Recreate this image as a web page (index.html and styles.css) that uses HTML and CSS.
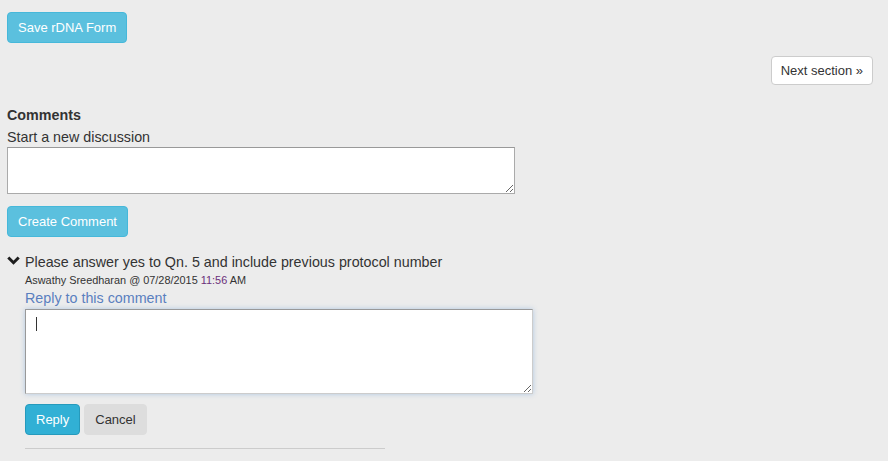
FILE: index.html
```html
<!DOCTYPE html>
<html lang="en">
<head>
    <meta charset="UTF-8">
    <title>rDNA Form</title>
    <link rel="stylesheet" href="styles.css">
</head>
<body>
    <div class="page">
        <div class="saveRow">
            <button class="btn btnInfo">Save rDNA Form</button>
        </div>
        <div class="navRow">
            <button class="btn btnDefault btnNav">Next section &raquo;</button>
        </div>

        <div class="comments">
            <div class="commentsTitle">Comments</div>
            <div class="newLabel">Start a new discussion</div>
            <textarea class="newText"></textarea>
            <div class="createRow">
                <button class="btn btnInfo">Create Comment</button>
            </div>

            <div class="thread">
                <div class="threadHead">
                    <svg class="chevron" width="13" height="9" viewBox="0 0 13 9">
                        <path d="M1.3 1.5 L6.5 6.7 L11.7 1.5" fill="none" stroke="#1e1e1e" stroke-width="3"/>
                    </svg>
                    <div class="threadBody">
                        <div class="commentText">Please answer yes to Qn. 5 and include previous protocol number</div>
                        <div class="commentMeta">Aswathy Sreedharan @ 07/28/2015 <span class="time">11:56</span> AM</div>
                        <a class="replyLink" href="#">Reply to this comment</a>
                        <div class="replyBox">
                            <textarea class="replyText"></textarea>
                            <span class="caret"></span>
                        </div>
                        <div class="replyActions">
                            <button class="btn btnInfoActive">Reply</button>
                            <button class="btn btnCancel">Cancel</button>
                        </div>
                        <div class="divider"></div>
                    </div>
                </div>
            </div>
        </div>
    </div>
</body>
</html>
```

FILE: styles.css
```css
html, body {
    margin: 0;
    padding: 0;
    background-color: #ececec;
}
.page {
    padding: 12px 15px 0 7px;
    font-family: "Liberation Sans", Arial, sans-serif;
    font-size: 14.3px;
    color: #333;
}
.btn {
    font-family: "Liberation Sans", Arial, sans-serif;
    font-size: 13px;
    line-height: 19px;
    padding: 5px 10px;
    border: 1px solid transparent;
    border-radius: 4px;
    cursor: pointer;
}
.btnInfo {
    background-color: #5bc0de;
    border-color: #46b8da;
    color: #fff;
}
.btnInfoActive {
    background-color: #31b0d5;
    border-color: #269abc;
    color: #fff;
}
.btnDefault {
    background-color: #fff;
    border-color: #ccc;
    color: #333;
}
.btnNav {
    padding: 4px 9px;
}
.btnCancel {
    background-color: #ddd;
    border-color: #ddd;
    color: #333;
}
.saveRow {
    height: 31px;
}
.navRow {
    display: flex;
    justify-content: flex-end;
    margin-top: 13px;
}
.comments {
    margin-top: 20px;
}
.commentsTitle {
    font-weight: bold;
    line-height: 20px;
}
.newLabel {
    line-height: 18px;
    margin-top: 3px;
}
.newText {
    display: block;
    width: 508px;
    height: 47px;
    box-sizing: border-box;
    margin: 1px 0 0;
    border: 1px solid #aaa;
    border-top-color: #999;
    background: #fff;
    resize: vertical;
}
.createRow {
    margin-top: 12px;
}
.thread {
    margin-top: 16px;
}
.threadHead {
    display: flex;
    gap: 5px;
}
.chevron {
    margin-top: 3px;
}
.commentText {
    line-height: 19px;
}
.commentMeta {
    font-size: 10.9px;
    line-height: 17px;
}
.time {
    color: #6b2f7a;
}
.replyLink {
    display: block;
    color: #5a7fbf;
    text-decoration: none;
    line-height: 17px;
    margin-top: 1px;
}
.replyBox {
    position: relative;
    margin-top: 2px;
}
.replyText {
    display: block;
    width: 508px;
    height: 85px;
    box-sizing: border-box;
    margin: 0;
    border: 1px solid #999;
    border-right-color: #ccc;
    border-bottom-color: #ccc;
    box-shadow: 0 0 5px rgba(102, 155, 215, 0.45);
    outline: none;
    background: #fff;
    padding: 6px 10px;
}
.caret {
    position: absolute;
    left: 11px;
    top: 8px;
    width: 1px;
    height: 14px;
    background: #333;
}
.replyActions {
    display: flex;
    gap: 4px;
    margin-top: 10px;
}
.divider {
    width: 360px;
    height: 1px;
    background: #ccc;
    margin-top: 13px;
}
```
